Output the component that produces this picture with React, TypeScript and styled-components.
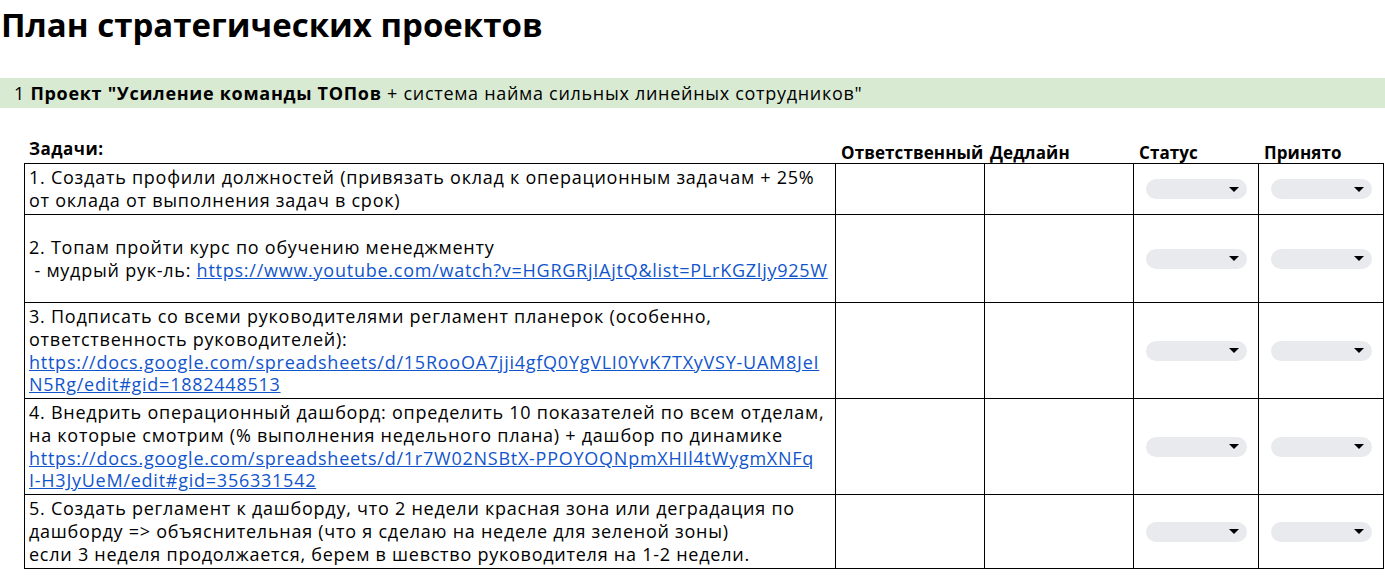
import React from "react";
import styled, { createGlobalStyle } from "styled-components";

const Global = createGlobalStyle`
  html, body { margin: 0; padding: 0; background: #fff; }
  body { font-family: "Open Sans", "Noto Sans", sans-serif; color: #000; }
`;

const Page = styled.div`
  width: 1385px;
  overflow: hidden;
`;

const Title = styled.h1`
  margin: 0;
  padding: 3px 0 0 1px;
  height: 74px;
  box-sizing: border-box;
  font-size: 33px;
  font-weight: 700;
  line-height: 44px;
`;

const Band = styled.div`
  background: #d9ead3;
  height: 30px;
  margin-top: 4px;
  padding-left: 14px;
  display: flex;
  align-items: center;
  font-size: 18px;
  letter-spacing: 0.7px;
  white-space: nowrap;
`;

const Table = styled.div`
  margin: 34px 0 0 24px;
  display: grid;
  grid-template-columns: 812px 149px 149px 125px 125px;
`;

const Head = styled.div<{ $top?: boolean }>`
  height: 21px;
  font-size: 17px;
  font-weight: 700;
  padding-left: 5px;
  display: flex;
  align-items: ${(p) => (p.$top ? "flex-start" : "flex-end")};
  margin-top: ${(p) => (p.$top ? "-4px" : "0")};
  line-height: 21px;
  letter-spacing: ${(p) => (p.$top ? "0.5px" : "0.1px")};
  white-space: nowrap;
`;

const Cell = styled.div<{ $first?: boolean; $topRow?: boolean }>`
  box-sizing: border-box;
  border-right: 1px solid #000;
  border-bottom: 1px solid #000;
  border-left: ${(p) => (p.$first ? "1px solid #000" : "none")};
  border-top: ${(p) => (p.$topRow ? "1px solid #000" : "none")};
  display: flex;
  align-items: center;
  justify-content: center;
  overflow: hidden;
`;

const TaskText = styled.div`
  width: 100%;
  padding-left: 4px;
  font-size: 18px;
  letter-spacing: 0.75px;
  line-height: 22.7px;
  white-space: nowrap;
  overflow: hidden;
`;

const Link = styled.a`
  color: #1155cc;
  text-decoration: underline;
`;

const Select = styled.div`
  width: 101px;
  height: 20px;
  border-radius: 10px;
  background: #e8eaed;
  display: flex;
  align-items: center;
  justify-content: flex-end;
  padding-right: 8px;
  box-sizing: border-box;
`;

const Arrow = styled.span`
  width: 0;
  height: 0;
  border-left: 5px solid transparent;
  border-right: 5px solid transparent;
  border-top: 5px solid #000;
`;

type Row = { h: number; lines: React.ReactNode[] };

const rows: Row[] = [
  {
    h: 52,
    lines: [
      "1. Создать профили должностей (привязать оклад к операционным задачам + 25%",
      "от оклада от выполнения задач в срок)",
    ],
  },
  {
    h: 88,
    lines: [
      "2. Топам пройти курс по обучению менеджменту",
      <>
        {"\u00a0- мудрый рук-ль: "}
        <Link>https://www.youtube.com/watch?v=HGRGRjIAjtQ&amp;list=PLrKGZljy925W</Link>
      </>,
    ],
  },
  {
    h: 96,
    lines: [
      "3. Подписать со всеми руководителями регламент планерок (особенно,",
      "ответственность руководителей):",
      <Link>https://docs.google.com/spreadsheets/d/15RooOA7jji4gfQ0YgVLI0YvK7TXyVSY-UAM8JeI</Link>,
      <Link>N5Rg/edit#gid=1882448513</Link>,
    ],
  },
  {
    h: 96,
    lines: [
      "4. Внедрить операционный дашборд: определить 10 показателей по всем отделам,",
      "на которые смотрим (% выполнения недельного плана) + дашбор по динамике",
      <Link>https://docs.google.com/spreadsheets/d/1r7W02NSBtX-PPOYOQNpmXHIl4tWygmXNFq</Link>,
      <Link>I-H3JyUeM/edit#gid=356331542</Link>,
    ],
  },
  {
    h: 74,
    lines: [
      "5. Создать регламент к дашборду, что 2 недели красная зона или деградация по",
      "дашборду => объяснительная (что я сделаю на неделе для зеленой зоны)",
      "если 3 неделя продолжается, берем в шевство руководителя на 1-2 недели.",
    ],
  },
];

export default function App() {
  return (
    <Page>
      <Global />
      <Title>План стратегических проектов</Title>
      <Band>
        1&nbsp;<b>Проект "Усиление команды ТОПов</b>&nbsp;+ система найма сильных линейных сотрудников"
      </Band>
      <Table>
        <Head $top>Задачи:</Head>
        <Head>Ответственный</Head>
        <Head>Дедлайн</Head>
        <Head>Статус</Head>
        <Head>Принято</Head>
        {rows.map((r, i) => (
          <React.Fragment key={i}>
            <Cell $first $topRow={i === 0} style={{ height: r.h }}>
              <TaskText>
                {r.lines.map((l, j) => (
                  <div key={j}>{l}</div>
                ))}
              </TaskText>
            </Cell>
            <Cell $topRow={i === 0} style={{ height: r.h }} />
            <Cell $topRow={i === 0} style={{ height: r.h }} />
            <Cell $topRow={i === 0} style={{ height: r.h }}>
              <Select>
                <Arrow />
              </Select>
            </Cell>
            <Cell $topRow={i === 0} style={{ height: r.h }}>
              <Select>
                <Arrow />
              </Select>
            </Cell>
          </React.Fragment>
        ))}
      </Table>
    </Page>
  );
}
